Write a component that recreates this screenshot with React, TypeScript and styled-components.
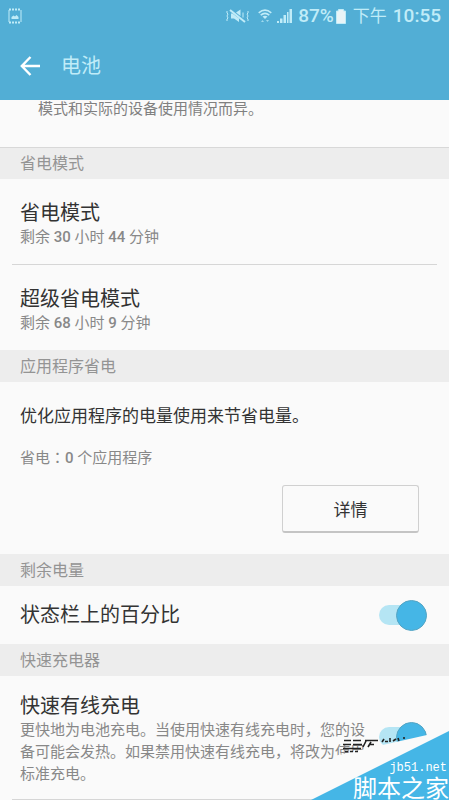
import React from 'react';
import styled, { createGlobalStyle } from 'styled-components';

const Global = createGlobalStyle`
  * { box-sizing: border-box; }
  html, body { margin: 0; }
  body {
    background: #fafafa;
    color: #333;
    font-family: Roboto, "Noto Sans CJK SC", sans-serif;
    overflow: hidden;
  }
  h1, h2, h3, p { margin: 0; font-weight: 400; }
`;

const Screen = styled.div`
  position: relative;
  min-height: 100vh;
  overflow: hidden;
`;

const TopBar = styled.header`
  background: #52aed5;
  color: #c0ecf8;
`;

const StatusBar = styled.div`
  display: flex;
  align-items: center;
  justify-content: space-between;
  height: 32px;
  padding: 0 8px;
`;

const StatusGroup = styled.div`
  display: flex;
  align-items: center;
  font-size: 19px;
  line-height: 32px;
`;

const StatusIcon = styled.svg<{ $after: number }>`
  display: block;
  flex: none;
  margin-right: ${(p) => p.$after}px;
`;

const Num = styled.span`
  font-weight: 500;
`;

const DayPart = styled.span`
  margin-right: 6px;
  font-size: 17px;
`;

const TitleBar = styled.div`
  display: flex;
  align-items: center;
  gap: 20px;
  height: 68px;
  padding: 0 20px 1px;
`;

const BackButton = styled.button`
  display: flex;
  padding: 0;
  border: 0;
  background: none;
  color: #fff;
`;

const Title = styled.h1`
  font-size: 20px;
  line-height: 30px;
`;

const Note = styled.p`
  height: 47px;
  padding: 0 38px;
  color: #808080;
  font-size: 15px;
  line-height: 18px;
`;

const SectionTitle = styled.h2<{ $ruled?: boolean }>`
  height: 32px;
  padding: 1px 20px 0;
  border-top: 1px solid ${(p) => (p.$ruled ? '#d8d8d8' : '#ededed')};
  background: #ededed;
  color: #949494;
  font-size: 16px;
  line-height: 30px;
`;

const Item = styled.section<{ $divided?: boolean }>`
  margin: 0 12px;
  padding: 21px 8px 16px;
  border-bottom: ${(p) => (p.$divided ? '1px solid #d6d6d6' : '0')};
`;

const ItemTitle = styled.h3`
  font-size: 20px;
  line-height: 26px;
`;

const Detail = styled.p`
  color: #888;
  font-size: 15px;
  line-height: 22px;
`;

const Centred = styled.span`
  font-family: "Noto Sans CJK TC", sans-serif;
`;

const AppSaving = styled.section`
  display: flex;
  flex-direction: column;
  padding: 21px 30px 21px 20px;
`;

const Lead = styled.p`
  margin-bottom: 17px;
  font-size: 17px;
  line-height: 26px;
`;

const DetailsButton = styled.button`
  align-self: flex-end;
  width: 137px;
  height: 48px;
  margin-top: 16px;
  border: 1px solid #d0d0d0;
  border-bottom: 2px solid #c4c4c4;
  border-radius: 3px;
  background: #fafafa;
  color: #333;
  font-family: inherit;
  font-size: 17px;
`;

const Switch = styled.input`
  appearance: none;
  position: relative;
  flex: none;
  width: 48px;
  height: 20px;
  margin: 0;
  border-radius: 10px;
  background: #b5e5f4;
  &::after {
    content: '';
    position: absolute;
    right: 0;
    top: -5px;
    width: 29px;
    height: 29px;
    border: 1px solid #55a5c4;
    border-radius: 50%;
    background: #45b6e6;
  }
`;

const SwitchRow = styled.label<{ $tall?: boolean }>`
  display: flex;
  align-items: center;
  justify-content: space-between;
  padding: ${(p) => (p.$tall ? '17px 22px 14px 20px' : '16px 22px 16px 20px')};
  ${Switch} {
    margin-bottom: ${(p) => (p.$tall ? 4 : 0)}px;
  }
`;

const SwitchText = styled.span`
  display: block;
  width: 350px;
`;

const BottomLine = styled.hr`
  margin: 0 12px;
  border: 0;
  border-top: 1px solid #d6d6d6;
`;

const Corner = styled.aside`
  position: absolute;
  right: 0;
  bottom: 0;
`;

const CornerShape = styled.svg`
  display: block;
`;

const CornerText = styled.div`
  position: absolute;
  right: 0;
  bottom: 0;
  color: #fff;
  text-align: right;
`;

const Site = styled.a`
  display: block;
  padding-right: 2px;
  color: inherit;
  font-family: "Liberation Mono", monospace;
  font-size: 12px;
  line-height: 12px;
  text-decoration: none;
`;

const SiteName = styled.span`
  display: block;
  font-family: "Noto Sans CJK SC", sans-serif;
  font-size: 24px;
  line-height: 26px;
`;

export default function App() {
  return (
    <Screen>
      <Global />
      <TopBar>
        <StatusBar>
          <svg width="14" height="16" viewBox="0 0 14 16" fill="none" stroke="currentColor">
            <path d="M1 2v12M13 2v12" />
            <path d="M1 1.500h12M1 14.500h12" strokeWidth="2" strokeDasharray="2 1" />
            <path d="M3.500 11V9l2-1.500 1.500 1 1.500-1.500 2 2v2z" fill="currentColor" stroke="none" />
          </svg>
          <StatusGroup>
            <StatusIcon $after={9} width="23" height="14" viewBox="0 0 23 14" fill="none" stroke="currentColor">
              <path d="M1 2v2l1 1-1 2 1 2-1 1v2M22 2v2l-1 1 1 2-1 2 1 1v2" />
              <path d="M4 1 19 13" strokeWidth="2" />
              <path d="M5 4.500v5h3l5 3.500V9.500L6.500 4.500zM10 3.500 14.500.5v6.500z" fill="currentColor" stroke="none" />
              <path d="M17 3.500v5" />
            </StatusIcon>
            <StatusIcon $after={5} width="14" height="15" viewBox="0 0 14 15" fill="none" stroke="currentColor">
              <path d="M.7 3.800Q7-1.400 13.300 3.800M2.700 6.200Q7 2.700 11.300 6.200" strokeWidth="1.600" />
              <path d="m4.500 7.500 2.500 2.500 2.500-2.500Q7 5.800 4.500 7.500z" fill="currentColor" stroke="none" />
              <path d="m3 13 1.500-2L6 13zM8 11h3l-1.500 2z" fill="currentColor" stroke="none" opacity=".7" />
            </StatusIcon>
            <StatusIcon $after={6} width="15" height="14" viewBox="0 0 15 14" fill="currentColor">
              <path d="M0 12h2v2H0zM3 9.500h2.500V14H3zM6.500 6H9v8H6.500zM10 3h1.500v11H10zM12.500 0H15v14h-2.500z" />
            </StatusIcon>
            <Num>87%</Num>
            <StatusIcon $after={6} width="13" height="15" viewBox="0 0 13 15">
              <path fill="#e9f4f7" stroke="#c0ecf8" d="M4.500.5h5v1.500h2v12.500h-9V2h2z" />
            </StatusIcon>
            <DayPart>下午</DayPart>
            <Num>10:55</Num>
          </StatusGroup>
        </StatusBar>
        <TitleBar>
          <BackButton aria-label="返回">
            <svg width="21" height="20" viewBox="0 0 21 20" fill="none" stroke="currentColor" strokeWidth="2.400">
              <path d="M10.500 1 1.800 10l8.700 9M2 10h18" />
            </svg>
          </BackButton>
          <Title>电池</Title>
        </TitleBar>
      </TopBar>
      <Note>模式和实际的设备使用情况而异。</Note>
      <SectionTitle $ruled>省电模式</SectionTitle>
      <Item $divided>
        <ItemTitle>省电模式</ItemTitle>
        <Detail>剩余 <Num>30</Num> 小时 <Num>44</Num> 分钟</Detail>
      </Item>
      <Item>
        <ItemTitle>超级省电模式</ItemTitle>
        <Detail>剩余 <Num>68</Num> 小时 <Num>9</Num> 分钟</Detail>
      </Item>
      <SectionTitle>应用程序省电</SectionTitle>
      <AppSaving>
        <Lead>优化应用程序的电量使用来节省电量。</Lead>
        <Detail>省电<Centred>：</Centred><Num>0</Num> 个应用程序</Detail>
        <DetailsButton>详情</DetailsButton>
      </AppSaving>
      <SectionTitle>剩余电量</SectionTitle>
      <SwitchRow>
        <ItemTitle>状态栏上的百分比</ItemTitle>
        <Switch type="checkbox" role="switch" defaultChecked />
      </SwitchRow>
      <SectionTitle>快速充电器</SectionTitle>
      <SwitchRow $tall>
        <SwitchText>
          <ItemTitle>快速有线充电</ItemTitle>
          <Detail>更快地为电池充电。当使用快速有线充电时，您的设备可能会发热。如果禁用快速有线充电，将改为使用标准充电。</Detail>
        </SwitchText>
        <Switch type="checkbox" role="switch" defaultChecked />
      </SwitchRow>
      <BottomLine />
      <Corner>
        <CornerShape width="149" height="80" viewBox="0 0 149 80">
          <path fill="#fafafa" d="M34 36 149 10v69H10L34 66z" />
          <g fill="none" stroke="#222" strokeWidth="1.600">
            <path d="M44 20.500h7M53 20.500h8M43 24.500h8M53 24.500h9M43 28.500h18" />
            <path d="M45 31.500h13" strokeDasharray="3 2" />
            <path d="M65 20.500h13M66 21l-3 6M70 24.500h4M71 22l-3 5" />
            <path d="M82 22l2-3M85 21.500h3M90 18v4M93 21l3-2M98 18l1 3M104 17v2" />
          </g>
          <path fill="#45b6e6" d="M11 80 149 11v69z" />
        </CornerShape>
        <CornerText>
          <Site href="#">jb51.net</Site>
          <SiteName>脚本之家</SiteName>
        </CornerText>
      </Corner>
    </Screen>
  );
}
